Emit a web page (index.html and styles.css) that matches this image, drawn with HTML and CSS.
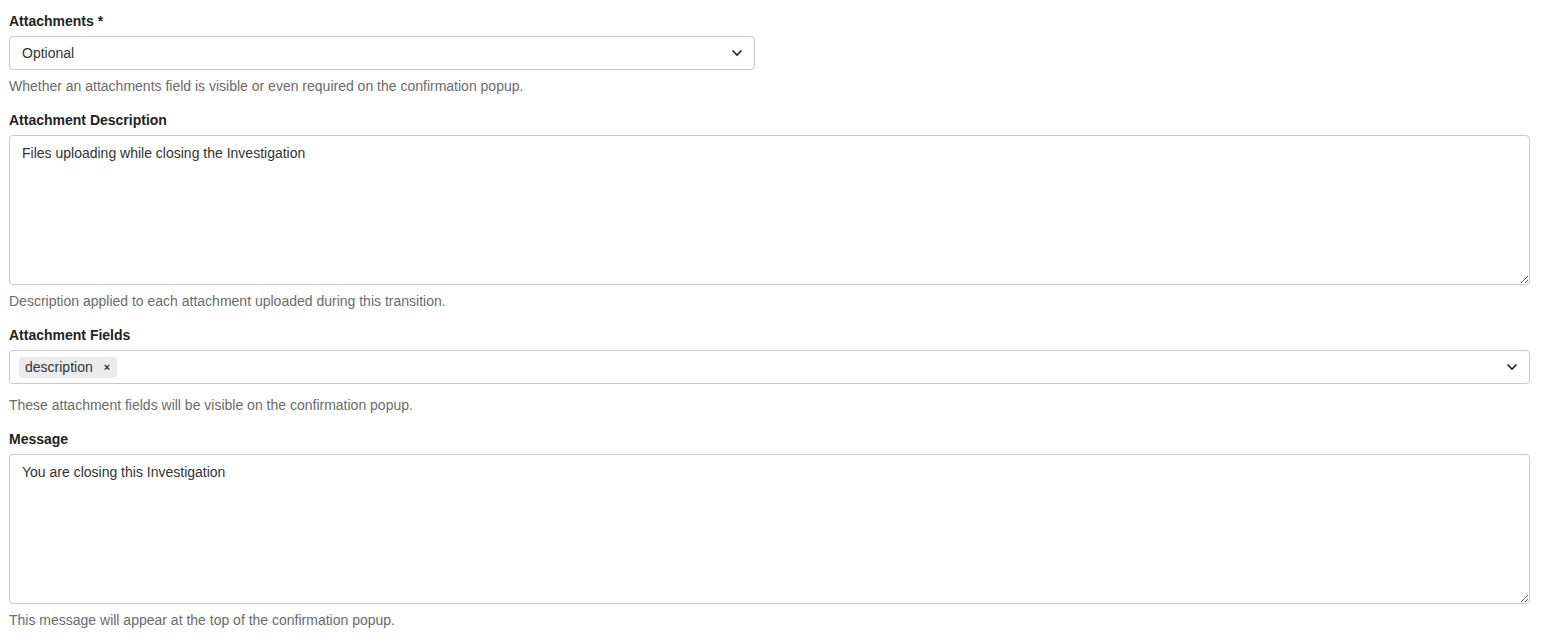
FILE: index.html
```
<!DOCTYPE html>
<html>
<head>
	<link rel="stylesheet" href="styles.css">
</head>
<body>
	<form class="transition-form">
		<div class="field">
			<label class="field-label">Attachments *</label>
			<div class="select narrow">
				<span class="select-value">Optional</span>
				<svg class="chevron" width="12" height="8" viewBox="0 0 12 8"><path d="M1.5 1.5 L6 6 L10.5 1.5" fill="none" stroke="#222" stroke-width="1.6"/></svg>
			</div>
			<div class="help">Whether an attachments field is visible or even required on the confirmation popup.</div>
		</div>
		<div class="field">
			<label class="field-label">Attachment Description</label>
			<textarea class="textbox">Files uploading while closing the Investigation</textarea>
			<div class="help">Description applied to each attachment uploaded during this transition.</div>
		</div>
		<div class="field">
			<label class="field-label">Attachment Fields</label>
			<div class="select multi">
				<span class="tag">description<span class="tag-remove">&times;</span></span>
				<svg class="chevron" width="12" height="8" viewBox="0 0 12 8"><path d="M1.5 1.5 L6 6 L10.5 1.5" fill="none" stroke="#222" stroke-width="1.6"/></svg>
			</div>
			<div class="help help-spaced">These attachment fields will be visible on the confirmation popup.</div>
		</div>
		<div class="field">
			<label class="field-label">Message</label>
			<textarea class="textbox">You are closing this Investigation</textarea>
			<div class="help">This message will appear at the top of the confirmation popup.</div>
		</div>
	</form>
</body>
</html>
```
FILE: styles.css
```
body {
	margin: 0;
	background-color: #FFFFFF;
	font-family: "Liberation Sans", Arial, sans-serif;
	font-size: 14px;
	color: #333333;
}
.transition-form {
	padding: 12px 13px 0 9px;
}
.field {
	margin-bottom: 16px;
}
.field-label {
	display: block;
	font-weight: bold;
	color: #222222;
	line-height: 19px;
	margin-bottom: 5px;
}
.select {
	box-sizing: border-box;
	height: 34px;
	border: 1px solid #C8C8C8;
	border-radius: 4px;
	display: flex;
	align-items: center;
	padding: 0 12px;
	background-color: #FFFFFF;
}
.select.narrow {
	width: 746px;
}
.select.multi {
	padding-left: 9px;
}
.select-value {
	flex: 1;
	color: #333333;
}
.chevron {
	margin-left: auto;
	margin-right: -1px;
}
.tag {
	display: inline-flex;
	align-items: center;
	height: 21px;
	padding: 0 7px 0 6px;
	background-color: #EBEBEB;
	border-radius: 3px;
	color: #333333;
}
.tag-remove {
	margin-left: 11px;
	font-weight: bold;
	font-size: 11px;
	color: #333333;
}
.textbox {
	display: block;
	box-sizing: border-box;
	width: 100%;
	height: 150px;
	margin: 0;
	border: 1px solid #C8C8C8;
	border-radius: 4px;
	padding: 8px 12px;
	font-family: "Liberation Sans", Arial, sans-serif;
	font-size: 14px;
	line-height: 18px;
	color: #333333;
	resize: vertical;
	outline: none;
}
.help {
	margin-top: 7px;
	line-height: 18px;
	color: #6B6B6B;
}
.help-spaced {
	margin-top: 12px;
}
```
